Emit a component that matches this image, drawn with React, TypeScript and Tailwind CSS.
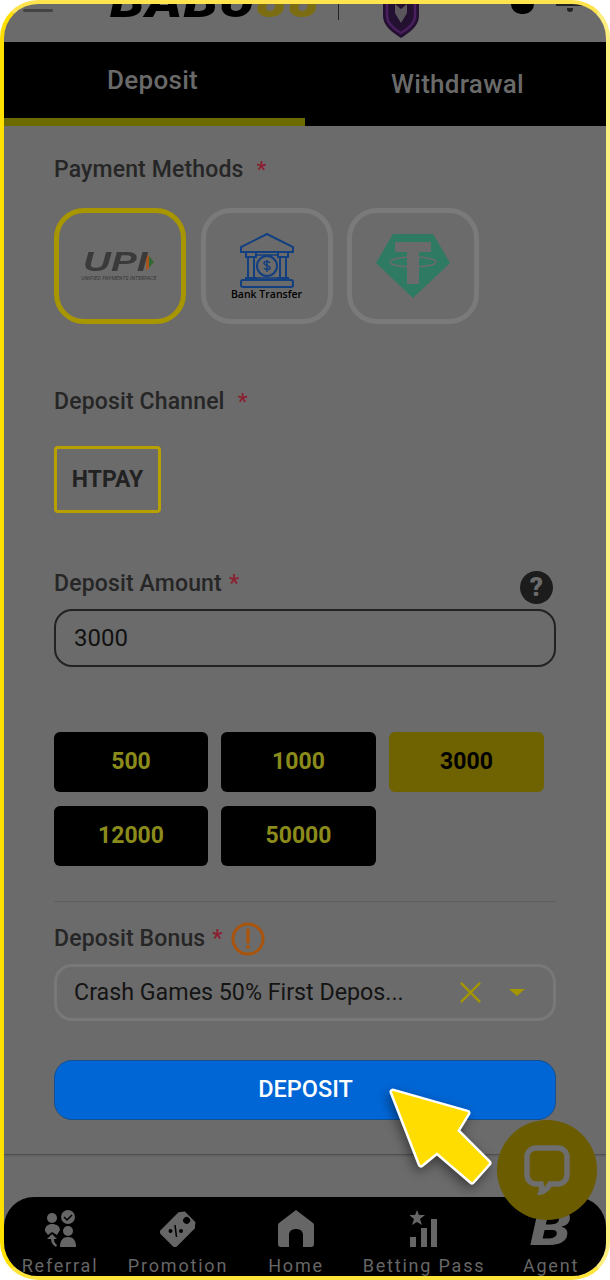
import { useMemo } from "react";

const font = { fontFamily: "Roboto, sans-serif" };

function Star() {
  return <span className="text-[#8a2030] ml-[13px] text-[22px]">*</span>;
}

function UpiLogo() {
  return (
    <div className="flex flex-col items-center mr-[2px]">
      <div className="flex items-center h-[20px]">
        <div className="w-[62px] h-[20px]">
          <span
            style={{ fontFamily: "'Liberation Sans', sans-serif" }}
            className="block origin-left scale-x-[1.38] text-[28px] leading-[20px] italic font-bold text-[#3a3a3a]"
          >
            UPI
          </span>
        </div>
        <svg width="10" height="20" viewBox="0 0 10 20">
          <path d="M1 1l8 9-8 9z" fill="#a8541c" />
          <path d="M4 4l5 6-5 6z" fill="#2f6a3a" />
        </svg>
      </div>
      <span className="text-[5px] leading-[6px] italic text-[#333] mt-[3px] tracking-[0.2px] whitespace-nowrap">UNIFIED PAYMENTS INTERFACE</span>
    </div>
  );
}

function BankIcon() {
  return (
    <svg width="54" height="55" viewBox="0 0 54 55" fill="none" stroke="#123f80" strokeWidth="2">
      <path d="M27 1L1 14v5h52v-5z" />
      <path d="M6 19v5h10v-5M38 19v5h10v-5" />
      <path d="M8 24v21M14 24v21M40 24v21M46 24v21" />
      <path d="M5 45h12M37 45h12" />
      <rect x="1" y="47" width="52" height="7" rx="2" />
      <path d="M16 22h22M17 45h20" strokeWidth="1.500" />
      <circle cx="27" cy="33" r="10" />
      <path d="M30 30c-1-2-6-2-6 0 0 3 6 2 6 5 0 2-5 2-6 0M27 27v12" strokeWidth="1.500" />
    </svg>
  );
}

function TetherIcon() {
  return (
    <svg width="74" height="64" viewBox="0 0 74 64">
      <path d="M17 0h40l17 29-37 35L0 29z" fill="#2f7a63" />
      <path d="M19 8h36v10H43v32H31V18H19z" fill="#6b6b6b" />
      <ellipse cx="37" cy="28" rx="23" ry="5" fill="none" stroke="#6b6b6b" strokeWidth="1.500" />
    </svg>
  );
}

function PayBox({ active, children }: { active?: boolean; children: React.ReactNode }) {
  return (
    <div
      className={`w-[132px] h-[116px] rounded-[30px] border-[5px] flex items-center justify-center shrink-0 ${
        active ? "border-[#a89600]" : "border-[#7a7a7a]"
      }`}
    >
      {children}
    </div>
  );
}

function AmountBtn({ value, active }: { value: string; active?: boolean }) {
  return (
    <div
      className={`h-[60px] rounded-[6px] flex items-center justify-center text-[23px] font-bold ${
        active ? "bg-[#6f6200] text-black" : "bg-black text-[#8b8b1c]"
      }`}
    >
      {value}
    </div>
  );
}

function NavItem({ label, icon }: { label: string; icon: React.ReactNode }) {
  return (
    <div className="flex flex-col items-center justify-end h-full">
      <div className="h-[38px] flex items-end justify-center">{icon}</div>
      <span className="text-[18px] leading-[20px] mt-[9px] tracking-[1.8px] text-[#666] whitespace-nowrap">{label}</span>
    </div>
  );
}

export default function App() {
  const amounts = useMemo(() => ["500", "1000", "3000", "12000", "50000"], []);
  return (
    <div
      style={font}
      className="relative w-[610px] h-[1280px] overflow-hidden bg-[#6b6b6b] border-[4px] border-t-[#ffe44d] border-r-[#fdee80] border-b-[#ffe53a] border-l-[#ffe000] rounded-[38px] flex flex-col"
    >
      {/* top bar, scrolled mostly out of view */}
      <header className="h-[38px] shrink-0 overflow-hidden flex items-start">
        <div className="w-[30px] h-[3px] bg-[#444] ml-[19px] mt-[5px] rounded-[2px] shrink-0" />
        <div className="ml-[57px] w-[208px] -mt-[26px] shrink-0 whitespace-nowrap">
          <div className="origin-left scale-x-[1.2] text-[46px] leading-[46px] italic font-black tracking-[1px]">
            <span className="text-black">BABU</span>
            <span className="text-[#7c6d12]">88</span>
          </div>
        </div>
        <div className="w-[1px] h-[16px] bg-[#222] ml-[20px] shrink-0" />
        <svg width="38" height="34" viewBox="0 0 38 34" className="ml-[43px] shrink-0">
          <path d="M1 0h36v12c0 10-10 17-18 22C11 29 1 22 1 12z" fill="#241030" />
          <path d="M5 0v12c0 7 7 13 14 17 7-4 14-10 14-17V0" fill="none" stroke="#4a1f60" strokeWidth="2.500" />
          <path d="M13 0l6 5 6-5v9l-6 10-6-10z" fill="#5a565c" />
        </svg>
        <div className="w-[23px] h-[10px] rounded-b-[10px] bg-black ml-[91px] shrink-0" />
        <div className="ml-[22px] w-[27px] flex flex-col items-center shrink-0">
          <div className="w-[27px] h-[2px] bg-[#222]" />
          <div className="w-[6px] h-[4px] rounded-b-full bg-[#222] mt-[2px]" />
        </div>
      </header>

      {/* tabs */}
      <div className="h-[84px] shrink-0 bg-black grid grid-cols-2">
        <div className="border-b-[8px] border-[#6b6b00] flex justify-center pr-[4px] text-[26px] tracking-[0.3px] text-[#6a6a6a] font-medium pt-[19px] leading-[38px]">Deposit</div>
        <div className="flex justify-center pl-[4px] text-[26px] tracking-[0.3px] text-[#6a6a6a] font-medium pt-[23px] leading-[38px]">Withdrawal</div>
      </div>

      {/* form */}
      <main className="flex-1 px-[50px] text-[#262626]">
        <label className="block mt-[29px] text-[23px] leading-[30px] font-medium tracking-[0.15px] text-[#262626]">
          Payment Methods<Star />
        </label>
        <div className="flex gap-[14.500px] mt-[23px]">
          <PayBox active><UpiLogo /></PayBox>
          <PayBox>
            <div className="flex flex-col items-center">
              <BankIcon />
              <span className="text-[10.500px] leading-[12px] font-semibold text-black" style={{ fontFamily: "'Open Sans', sans-serif" }}>Bank Transfer</span>
            </div>
          </PayBox>
          <PayBox><TetherIcon /></PayBox>
        </div>

        <label className="block mt-[63px] text-[23px] leading-[30px] font-medium tracking-[0.15px] text-[#262626]">
          Deposit Channel<Star />
        </label>
        <div className="mt-[29px] w-[107px] h-[67px] border-[3px] border-[#b8a000] rounded-[4px] flex items-center justify-center pt-[1px] text-[23px] font-bold text-[#222]">
          HTPAY
        </div>

        <div className="flex justify-between items-start mt-[56px]">
          <label className="text-[23px] leading-[30px] font-medium tracking-[0.15px] text-[#262626]">
            Deposit Amount<span className="text-[#8a2030] ml-[7px]">*</span>
          </label>
          <div className="w-[33px] h-[33px] mt-[2px] mr-[3px] rounded-full bg-[#1c1c1c] text-[#6b6b6b] flex items-center justify-center text-[26px] font-black">?</div>
        </div>
        <div className="mt-[5px] h-[58px] rounded-[18px] border-[2px] border-[#222] flex items-center pl-[18px] text-[24px] text-[#111]">3000</div>

        <div className="grid grid-cols-[154px_155px_155px] gap-x-[13px] gap-y-[14px] mt-[65px]">
          {amounts.map((a) => (
            <AmountBtn key={a} value={a} active={a === "3000"} />
          ))}
        </div>

        <div className="h-[1px] bg-[#5f5f5f] mt-[35px]" />

        <div className="flex items-center mt-[20px] h-[34px]">
          <label className="text-[23px] leading-[30px] font-medium tracking-[0.15px] text-[#262626]">
            Deposit Bonus<span className="text-[#8a2030] ml-[7px]">*</span>
          </label>
          <svg width="34" height="34" viewBox="0 0 34 34" className="ml-[8px]" fill="none">
            <circle cx="17" cy="17" r="15" stroke="#a8540c" strokeWidth="3" />
            <path d="M17 8v12" stroke="#a8540c" strokeWidth="3.500" strokeLinecap="round" />
            <circle cx="17" cy="25" r="2" fill="#a8540c" />
          </svg>
        </div>
        <div className="mt-[8px] h-[57px] rounded-[18px] border-[3px] border-[#787878] flex items-center pl-[17px] text-[23.250px] text-[#141414]">
          <span className="w-[385px] whitespace-nowrap">Crash Games 50% First Depos...</span>
          <svg width="23" height="23" viewBox="0 0 24 24" stroke="#a59500" strokeWidth="2.500" fill="none">
            <path d="M2 2l20 20M22 2L2 22" />
          </svg>
          <div className="ml-[27px] w-0 h-0 border-x-[8px] border-x-transparent border-t-[7px] border-t-[#a59500]" />
        </div>

        <button className="block w-full mt-[39px] h-[60px] rounded-[18px] bg-[#0066d6] border border-[#14508f] pl-[1px] text-white text-[23.500px] font-medium">DEPOSIT</button>
      </main>

      <div className="absolute left-0 right-0 top-[1150px] h-[1px] bg-[#505050] shadow-[0_1px_2px_rgba(0,0,0,0.2)]" />

      {/* bottom nav */}
      <nav className="h-[79px] shrink-0 bg-black rounded-t-[30px] grid grid-cols-[112px_124px_112px_144px_1fr] text-center overflow-hidden">
        <NavItem
          label="Referral"
          icon={
            <svg width="31" height="37" viewBox="0 0 31 37" fill="#666">
              <circle cx="7" cy="8" r="5" />
              <circle cx="23" cy="7" r="7" />
              <path d="M19 7l3 3 5-5" fill="none" stroke="#000" strokeWidth="1.500" />
              <circle cx="23" cy="21" r="5" />
              <path d="M15 37c0-7 3-10 8-10s8 3 8 10z" />
              <path d="M0 21c0-5 3-7 7-7s8 2 8 6l-3 5-5-3-4 3z" />
              <path d="M7 24l5 5H9c0 3 1 4 3 6l-1 2c-3-2-5-4-5-8H2z" />
            </svg>
          }
        />
        <NavItem
          label="Promotion"
          icon={
            <svg width="37" height="37" viewBox="0 0 37 37">
              <g transform="rotate(45 18.500 18.500)">
                <path d="M11 2h15l4 5v25c0 2-1 3-3 3H10c-2 0-3-1-3-3V7z" fill="#666" />
                <circle cx="18.500" cy="7" r="3.500" fill="#000" />
              </g>
              <path d="M15 15l1.500 12" stroke="#000" strokeWidth="1.500" />
              <circle cx="10.500" cy="21" r="2" fill="#000" />
              <circle cx="21" cy="21" r="2" fill="#000" />
            </svg>
          }
        />
        <NavItem
          label="Home"
          icon={
            <svg width="36" height="37" viewBox="0 0 36 37" fill="#666">
              <path d="M18 0L1 13c-1 1-1 2-1 3v18c0 2 1 3 3 3h8V25c0-4 3-6 7-6s7 2 7 6v12h8c2 0 3-1 3-3V16c0-1 0-2-1-3z" />
            </svg>
          }
        />
        <NavItem
          label="Betting Pass"
          icon={
            <svg width="28" height="37" viewBox="0 0 28 37" fill="#666">
              <path d="M7 0l2 5h6l-5 4 2 6-5-3-5 3 2-6-5-4h6z" />
              <rect x="0" y="27" width="6" height="10" />
              <rect x="11" y="18" width="6" height="19" />
              <rect x="21" y="9" width="6" height="28" />
            </svg>
          }
        />
        <NavItem
          label="Agent"
          icon={<span className="block origin-bottom scale-x-[1.3] text-[50px] leading-[38px] italic font-black text-[#666]">B</span>}
        />
      </nav>

      {/* chat bubble */}
      <div className="absolute left-[493px] top-[1116px] w-[100px] h-[100px] rounded-full bg-[#6b5c00] flex items-center justify-center">
        <svg width="46" height="50" viewBox="0 0 46 50" fill="none">
          <path d="M12 3h22c5 0 9 4 9 9v18c0 5-4 9-9 9h-8c-2 4-5 7-9 8 1-3 1-5 0-8h-5c-5 0-9-4-9-9V12c0-5 4-9 9-9z" stroke="#6e6e6e" strokeWidth="5.500" />
        </svg>
      </div>

      {/* pointer */}
      <svg width="110" height="105" viewBox="0 0 110 105" className="absolute left-[381px] top-[1081px] drop-shadow-[-2px_4px_6px_rgba(0,0,0,0.45)]">
        <path d="M8 7L82 28L71 46L103 78L87 96L52 66L36 79Z" fill="#fff" stroke="#fff" strokeWidth="7" strokeLinejoin="round" />
        <path d="M8 7L82 28L71 46L103 78L87 96L52 66L36 79Z" fill="#ffdd00" stroke="#ffdd00" strokeWidth="2" strokeLinejoin="round" />
      </svg>
    </div>
  );
}
